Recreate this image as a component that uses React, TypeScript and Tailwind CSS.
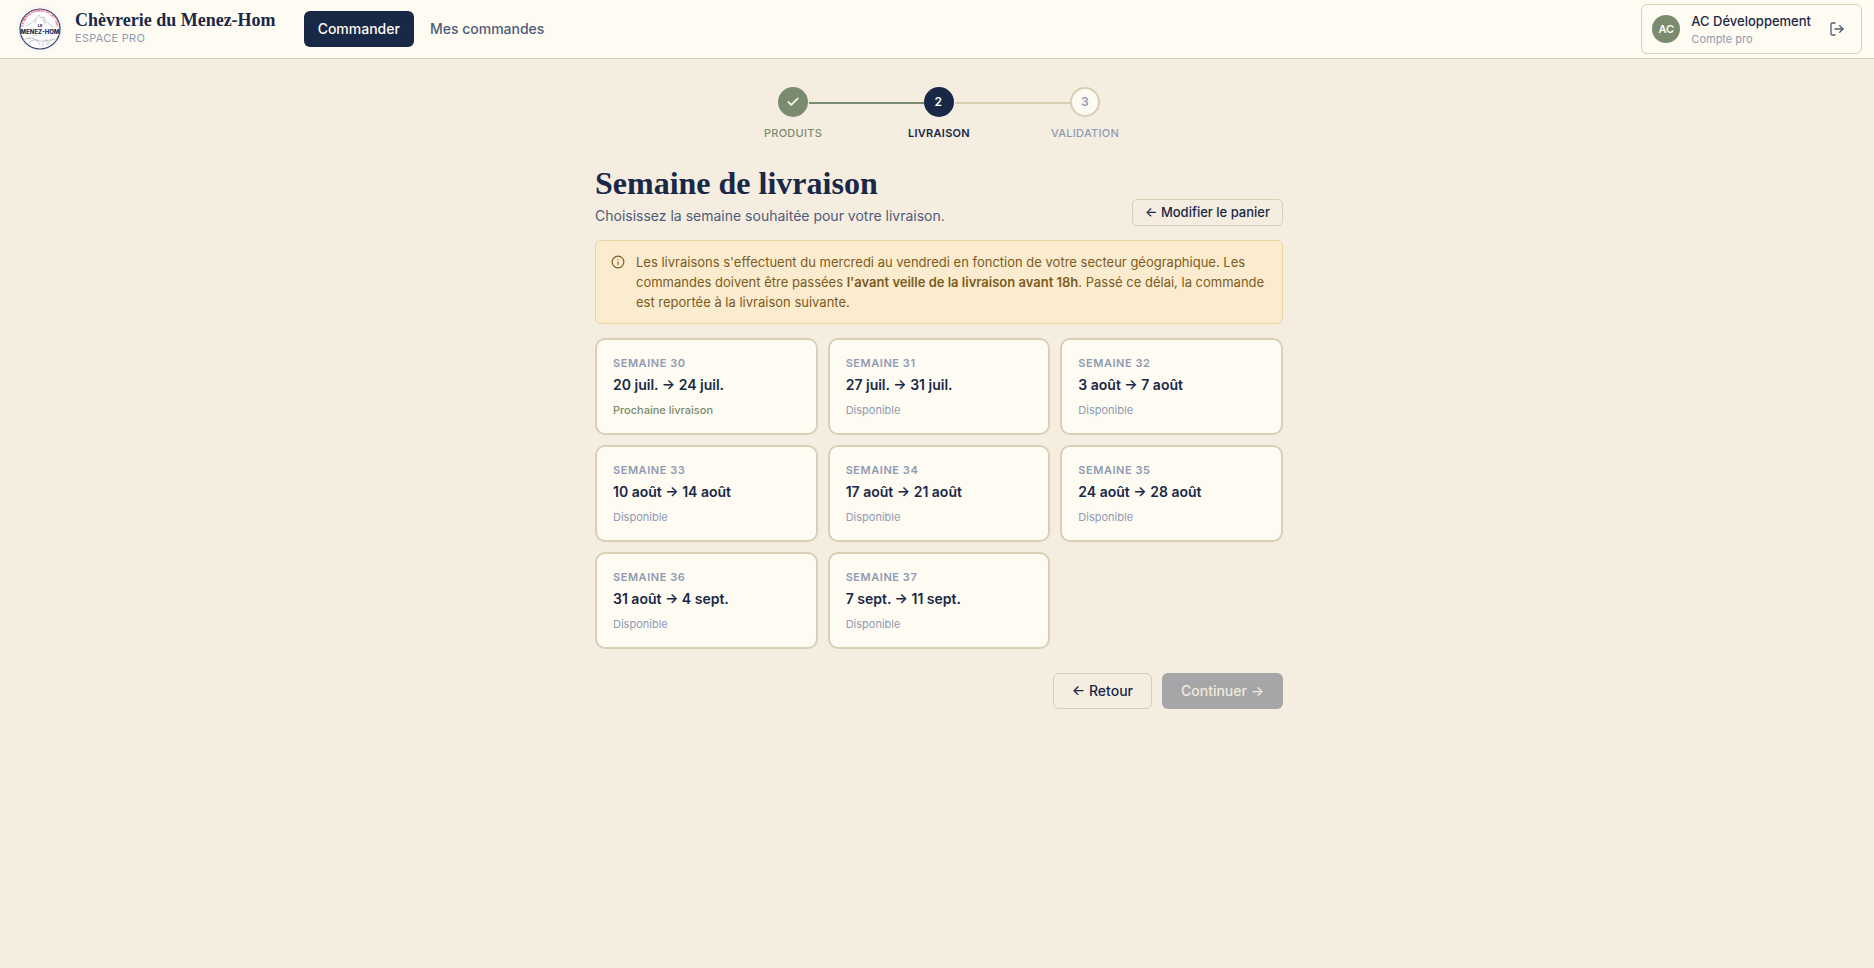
import { useState } from 'react';
import { Check, Info, LogOut } from 'lucide-react';

type Week = {
  number: number;
  range: string;
  next?: boolean;
};

const weeks: Week[] = [
  { number: 30, range: '20 juil. → 24 juil.', next: true },
  { number: 31, range: '27 juil. → 31 juil.' },
  { number: 32, range: '3 août → 7 août' },
  { number: 33, range: '10 août → 14 août' },
  { number: 34, range: '17 août → 21 août' },
  { number: 35, range: '24 août → 28 août' },
  { number: 36, range: '31 août → 4 sept.' },
  { number: 37, range: '7 sept. → 11 sept.' },
];

function Logo() {
  return (
    <svg viewBox="0 0 48 48" className="size-12 shrink-0" role="img" aria-label="Le Menez-Hom">
      <circle cx="24" cy="24" r="24" fill="#f7f7f8" />
      <circle cx="24" cy="24" r="20" fill="#fdfdfd" stroke="#33415f" strokeWidth="1.2" />
      <defs>
        <path id="logo-arc" d="M7.5 23a16.5 16.5 0 0 1 33 0" />
      </defs>
      <text fill="#e0465f" fontSize="3" fontWeight="700" fontFamily="Inter, sans-serif" textAnchor="middle">
        <textPath href="#logo-arc" startOffset="50%">FROMAGE FERMIER AU LAIT CRU</textPath>
      </text>
      <g fill="none" stroke="#b4b7bd" strokeWidth="0.7" strokeLinecap="round">
        <path d="M11 21c4-2 6-5 9-7l3-4 2 3 3-1 1 4 3 2 5 4M20 14l-1 4M27 14l2 5" />
        <path d="M6 30c7-3 11 1 17 0s9-3 18-1M8 35c5-3 8-2 12 0s10 1 19-1" />
        <path d="M13 38c2-3 6-4 9-2l2 4M27 41c-1-4 1-6 4-6M31 35v5M36 35c-3 0-4 2-3 4M17 33l4 2M11 33l3 1" />
      </g>
      <path d="M5 24h38v6H5z" fill="#fdfdfd" />
      <text x="24" y="22" fill="#24314f" fontSize="4" fontWeight="800" fontFamily="Inter, sans-serif" textAnchor="middle">
        LE
      </text>
      <text x="24" y="29" fill="#24314f" fontSize="6" fontWeight="800" fontFamily="Inter, sans-serif" textAnchor="middle">
        MENEZ-HOM
      </text>
    </svg>
  );
}

function Header() {
  return (
    <header className="flex items-center justify-between border-b border-[#d9cfb5] bg-[#fefbf2] py-1 pr-3 pl-4">
      <div className="flex items-center">
        <a href="#accueil" className="flex items-center gap-[11px]">
          <Logo />
          <span className="flex flex-col pb-[3px]">
            <span className="font-['Liberation_Serif',serif] text-lg leading-5 font-bold">
              Chèvrerie du Menez-Hom
            </span>
            <span className="text-[11px] leading-4 tracking-wide text-[#8f9ab3]">ESPACE PRO</span>
          </span>
        </a>
        <nav className="ml-7 flex gap-0.5 text-sm font-medium">
          <a href="#commander" className="rounded-md bg-[#1a2847] px-3.5 py-2 text-[#fefbf2]">
            Commander
          </a>
          <a href="#commandes" className="rounded-md px-3.5 py-2 text-[#4f5b7a]">
            Mes commandes
          </a>
        </nav>
      </div>

      <div className="flex h-[50px] items-center rounded-md border border-[#d9cfb5] pr-4 pl-2.5">
        <span className="flex size-7 items-center justify-center rounded-full bg-[#7a8b6f] text-[11px] font-semibold text-[#fefbf2]">
          AC
        </span>
        <span className="ml-[11px] flex flex-col pb-px">
          <span className="text-[13px] leading-5 font-medium">AC Développement</span>
          <span className="text-[11px] leading-4 text-[#8f9ab3]">Compte pro</span>
        </span>
        <button type="button" aria-label="Se déconnecter" className="ml-[18px] text-[#4f5b7a]">
          <LogOut className="size-4" />
        </button>
      </div>
    </header>
  );
}

function Stepper() {
  return (
    <ol className="mx-auto flex w-full max-w-[438px] text-center text-[11px] leading-4 tracking-wide">
      <li className="flex flex-1 flex-col gap-2 font-medium text-[#7a8b6f]">
        <span className="flex items-center">
          <span className="flex-1" />
          <span className="flex size-[30px] items-center justify-center rounded-full bg-[#7a8b6f] text-[#fefbf2]">
            <Check className="size-3.5" strokeWidth={3} />
          </span>
          <span className="mt-0.5 ml-px h-0.5 flex-1 bg-[#7a8b6f]" />
        </span>
        PRODUITS
      </li>
      <li className="flex flex-1 flex-col gap-2 font-semibold" aria-current="step">
        <span className="flex items-center">
          <span className="mt-0.5 h-0.5 flex-1 bg-[#7a8b6f]" />
          <span className="flex size-[30px] items-center justify-center rounded-full bg-[#1a2847] text-xs text-[#fefbf2]">
            2
          </span>
          <span className="mt-0.5 ml-px h-0.5 flex-1 bg-[#d9cfb5]" />
        </span>
        LIVRAISON
      </li>
      <li className="flex flex-1 flex-col gap-2 font-medium text-[#8f9ab3]">
        <span className="flex items-center">
          <span className="mt-0.5 h-0.5 flex-1 bg-[#d9cfb5]" />
          <span className="flex size-[30px] items-center justify-center rounded-full border-2 border-[#d9cfb5] bg-[#fefbf2] text-xs font-semibold">
            3
          </span>
          <span className="flex-1" />
        </span>
        VALIDATION
      </li>
    </ol>
  );
}

export default function App() {
  const [selected, setSelected] = useState<number | null>(null);

  return (
    <div className="min-h-screen bg-[#f5eee0] font-[Inter,sans-serif] text-[#1a2847]">
      <Header />

      <main className="pt-7 pb-12 pl-1">
        <Stepper />

        <div className="mx-auto mt-6 max-w-[688px]">
          <div className="flex items-end justify-between">
            <div>
              <h1 className="font-['Liberation_Serif',serif] text-[32px] leading-9 font-bold">
                Semaine de livraison
              </h1>
              <p className="mt-1 text-sm leading-[21px] text-[#4f5b7a]">
                Choisissez la semaine souhaitée pour votre livraison.
              </p>
            </div>
            <button
              type="button"
              className="rounded-[5px] border border-[#d9cfb5] px-3 text-[13px] leading-[25px] font-medium"
            >
              ← Modifier le panier
            </button>
          </div>

          {/* Delivery notice */}
          <div className="mt-3.5 flex gap-[11px] rounded-md border border-[#e9d3a1] bg-[#fbebcf] px-[15px] py-[11px] text-[13px] leading-5 text-[#7d5c1c]">
            <Info className="mt-[3px] size-3.5 shrink-0" />
            <p>
              Les livraisons s'effectuent du mercredi au vendredi en fonction de votre secteur géographique. Les
              commandes doivent être passées <strong className="font-semibold">l'avant veille de la livraison avant 18h</strong>.
              Passé ce délai, la commande est reportée à la livraison suivante.
            </p>
          </div>

          {/* Weeks */}
          <div className="mt-3.5 grid grid-cols-3 gap-2.5">
            {weeks.map((week) => (
              <button
                key={week.number}
                type="button"
                onClick={() => setSelected(week.number)}
                className={`flex flex-col rounded-[10px] border-2 bg-[#fefbf2] p-4 text-left ${
                  selected === week.number ? 'border-[#1a2847]' : 'border-[#d9cfb5]'
                }`}
              >
                <span className="text-[11px] leading-[14px] font-semibold tracking-wider text-[#8f9ab3]">
                  SEMAINE {week.number}
                </span>
                <span className="mt-1 text-sm leading-[21px] font-semibold">{week.range}</span>
                <span
                  className={`mt-2 text-[11px] leading-[14px] ${
                    week.next ? 'font-medium text-[#7a8b6f]' : 'text-[#8f9ab3]'
                  }`}
                >
                  {week.next ? 'Prochaine livraison' : 'Disponible'}
                </span>
              </button>
            ))}
          </div>

          <div className="mt-6 flex justify-end gap-2.5 text-sm font-medium">
            <button type="button" className="h-9 rounded-md border border-[#d9cfb5] px-[18px]">
              ← Retour
            </button>
            <button
              type="button"
              disabled={selected === null}
              className="h-9 rounded-md bg-[#1a2847] px-[19px] text-[#fefbf2] disabled:bg-[#a6a6a8] disabled:text-[#f0eade]"
            >
              Continuer →
            </button>
          </div>
        </div>
      </main>
    </div>
  );
}
